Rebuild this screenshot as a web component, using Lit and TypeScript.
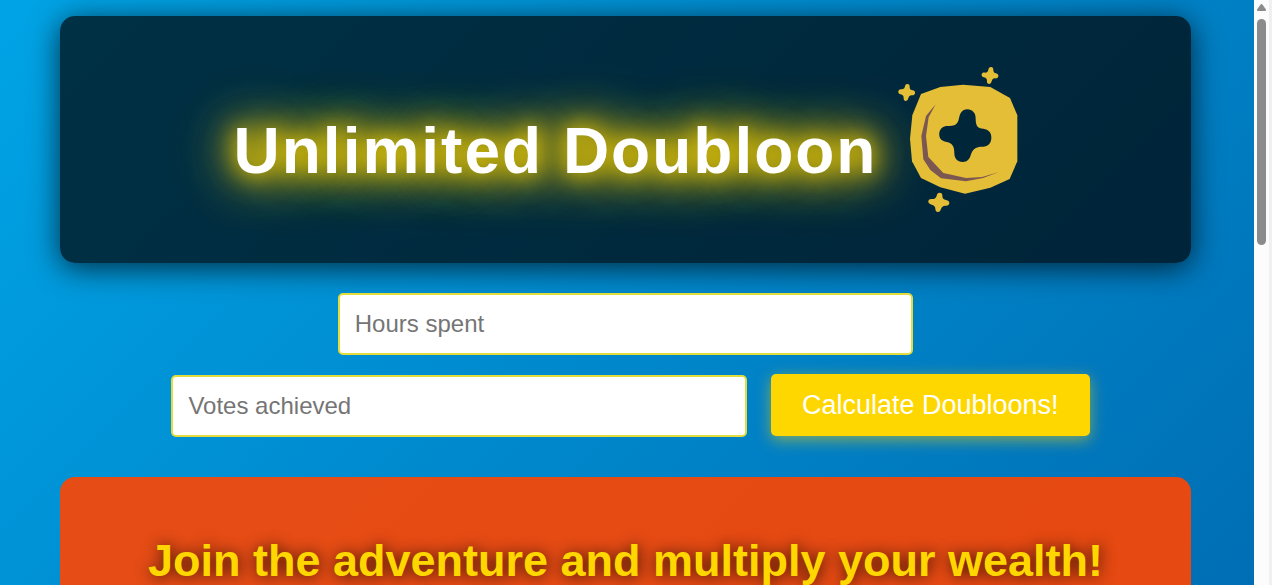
import { LitElement, html, css } from "lit";
import { customElement } from "lit/decorators.js";

@customElement("doubloon-icon")
class DoubloonIcon extends LitElement {
  static styles = css`
    :host {
      display: block;
      flex: none;
    }
    svg {
      display: block;
      width: 128px;
      height: 151px;
    }
    .gold {
      fill: #e5be37;
    }
    .hole {
      fill: #00263a;
    }
    .shade {
      fill: #7a5750;
    }
  `;

  render() {
    return html`
      <svg viewBox="38 42 384 453" role="img" aria-label="Doubloon">
        <path
          class="gold"
          d="M122 132 180 111 248 104 330 111 389 144 411 196 411 334 388 387 330 413 254 431 180 412 122 384 95 334 89 266 96 196Z"
        />
        <path
          class="shade"
          d="M166 163 145 202 137 258 144 321 189 369 257 384 305 381 356 366 308 384 257 394 182 385 150 360 129 328 123 258 137 198Z"
        />
        <path
          class="hole"
          d="M261 178C276 178 287 190 286 206C286 226 291 235 309 236C325 238 334 249 333 264C333 280 322 291 306 290C287 290 278 296 272 313C268 329 260 336 247 336C231 336 222 325 222 310C222 287 216 279 196 275C182 272 175 262 177 248C179 235 190 227 204 228C223 229 232 224 236 205C239 187 248 178 261 178Z"
        />
        <path
          class="gold"
          d="M81 102C87 102 88 106 88 111C88 118 91 120 97 121C102 122 105 125 104 130C103 135 99 136 94 136C88 136 86 139 84 145C83 150 80 153 75 153C71 152 70 149 70 144C70 138 67 135 61 133C56 132 53 129 54 124C55 119 59 117 64 118C70 118 73 115 74 109C75 104 77 102 81 102Z"
        />
        <path
          class="gold"
          d="M332 51C337 51 339 55 339 60C339 66 342 69 347 70C352 71 355 75 354 79C353 84 349 86 344 85C338 85 336 88 334 94C333 99 330 102 326 102C321 101 319 98 320 93C320 87 317 84 311 82C306 81 303 78 304 73C305 69 309 67 314 68C320 68 323 65 324 59C325 54 327 51 332 51Z"
        />
        <path
          class="gold"
          d="M178 428C184 428 187 432 186 438C186 445 190 449 197 450C204 451 208 455 207 460C206 466 202 468 195 467C188 467 184 471 182 477C180 483 178 486 173 486C168 486 165 482 165 476C165 469 161 466 154 464C147 462 143 459 144 453C145 448 149 446 156 447C163 447 167 444 169 437C170 431 173 428 178 428Z"
        />
      </svg>
    `;
  }
}

@customElement("app-root")
class AppRoot extends LitElement {
  static styles = css`
    :host {
      display: flex;
      height: 100vh;
      overflow: hidden;
      font-family: "Liberation Sans", Arial, sans-serif;
      background: #fcfcfc;
    }
    * {
      box-sizing: border-box;
    }
    .page {
      flex: 1;
      min-width: 0;
      overflow: hidden;
      padding: 16px 63px 0 60px;
      background: linear-gradient(135deg, #00a4e6, #006eb4);
    }
    .hero {
      display: flex;
      align-items: center;
      justify-content: center;
      gap: 16px;
      padding: 48px 0 48px 4px;
      border-radius: 15px;
      background: rgba(0, 0, 0, 0.7);
      box-shadow: 0 5px 30px rgba(0, 0, 0, 0.7);
    }
    .title {
      margin: 22px 0 0;
      font-size: 64px;
      line-height: 74px;
      letter-spacing: 2px;
      white-space: nowrap;
      color: #fff;
      text-shadow:
        0 0 20px rgba(255, 215, 0, 0.7),
        0 0 30px rgba(255, 215, 0, 0.8),
        0 0 50px #ffd700,
        0 0 60px #ffd700;
    }
    .form {
      display: flex;
      flex-wrap: wrap;
      align-items: baseline;
      justify-content: center;
      column-gap: 4px;
      margin: 20px 0 30px;
    }
    .field {
      width: calc(50% + 10px);
      height: 62px;
      margin: 10px;
      padding: 15px;
      border: 2px solid #e2dc3c;
      border-radius: 5px;
      font: 24px/28px "Liberation Sans", Arial, sans-serif;
      color: #333;
      background: #fff;
    }
    .field::placeholder {
      color: #757575;
      opacity: 1;
    }
    .submit {
      margin: 0 0 0 10px;
      padding: 15px 31px;
      border: 0;
      border-radius: 5px;
      font: 27px/32px "Liberation Sans", Arial, sans-serif;
      color: #fff;
      background: #ffd700;
      box-shadow: 0 4px 15px rgba(255, 215, 0, 0.5);
    }
    .offer {
      padding: 58px 24px;
      border-radius: 15px;
      background: rgba(255, 69, 0, 0.9);
      text-align: center;
    }
    .offer-title {
      display: flex;
      justify-content: center;
      margin: 0;
      font-size: 45px;
      line-height: 52px;
      white-space: nowrap;
      color: #ffd700;
      text-shadow: 1px 1px 15px rgba(0, 0, 0, 0.8);
    }
    .scrollbar {
      flex: none;
      width: 18px;
      padding: 4px 3px 0;
      border-right: 3px solid #f0f0f0;
      background: #fcfcfc;
    }
    .arrow {
      display: block;
      width: 9px;
      height: 7px;
      fill: #8b8b8b;
    }
    .thumb {
      width: 9px;
      height: 226px;
      margin-top: 8px;
      border-radius: 5px;
      background: #8b8b8b;
    }
  `;

  render() {
    return html`
      <main class="page">
        <header class="hero">
          <h1 class="title">Unlimited Doubloon</h1>
          <doubloon-icon></doubloon-icon>
        </header>
        <form class="form" @submit=${(e: Event) => e.preventDefault()}>
          <input class="field" type="text" inputmode="numeric" placeholder="Hours spent" aria-label="Hours spent" />
          <input class="field" type="text" inputmode="numeric" placeholder="Votes achieved" aria-label="Votes achieved" />
          <button class="submit" type="submit">Calculate Doubloons!</button>
        </form>
        <section class="offer">
          <h2 class="offer-title">Join the adventure and multiply your wealth!</h2>
        </section>
      </main>
      <div class="scrollbar" aria-hidden="true">
        <svg class="arrow" viewBox="0 0 9 7"><path d="M4.5 0C5 0 5.3.3 5.6.7L8.8 5.2C9.3 6 9 7 8 7H1C0 7-.3 6 .2 5.2L3.4.7C3.7.3 4 0 4.5 0Z" /></svg>
        <div class="thumb"></div>
      </div>
    `;
  }
}
